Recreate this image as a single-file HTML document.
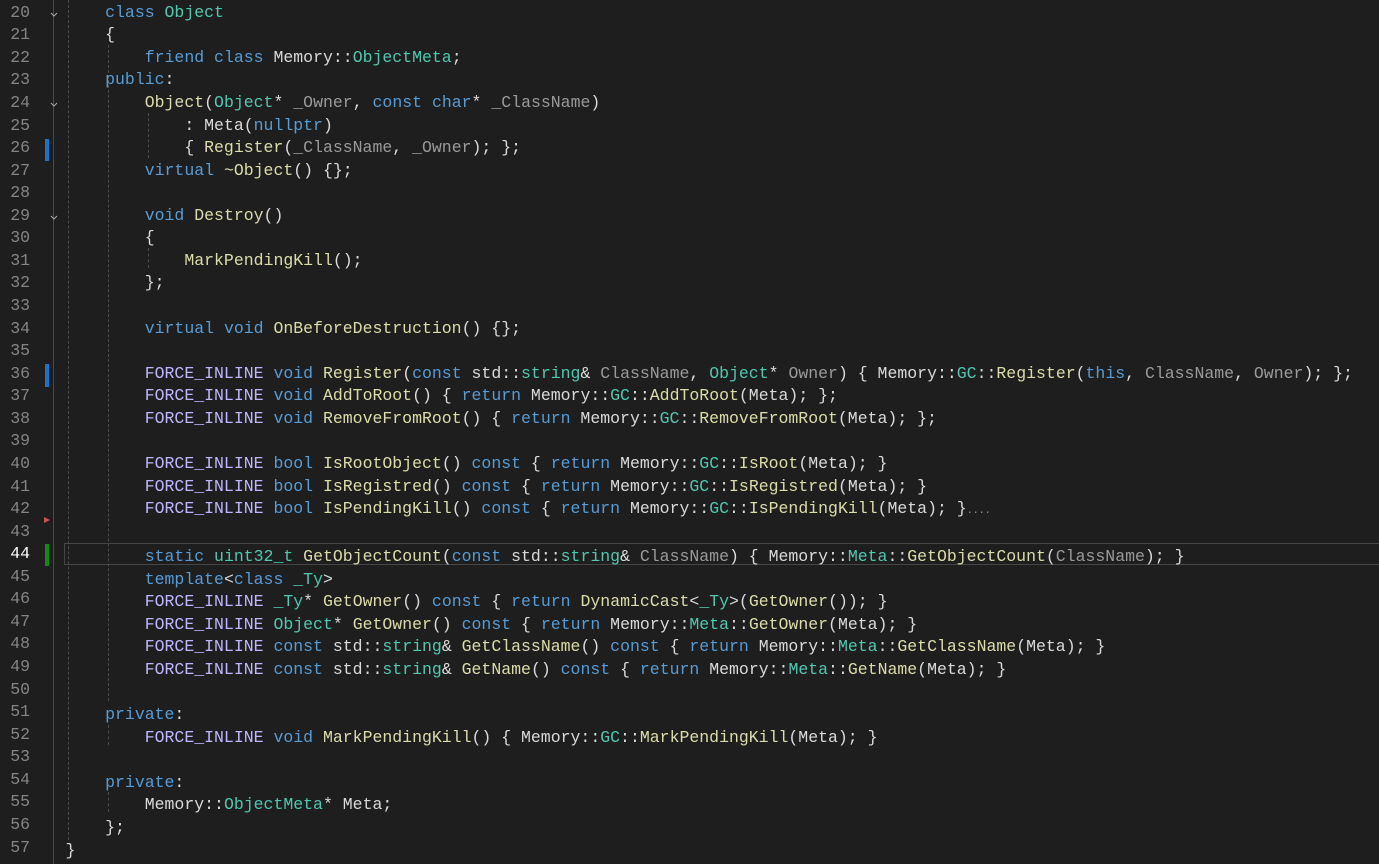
<!DOCTYPE html>
<html><head><meta charset="utf-8"><style>
html,body{margin:0;padding:0;background:#1e1e1e;width:1379px;height:864px;overflow:hidden}
#g{position:absolute;left:0;top:1.7px;width:30px;text-align:right;font:16.5px/22.57px "Liberation Mono",monospace;color:#858585}
#c{position:absolute;left:65.5px;top:1.7px;font:16.5px/22.57px "Liberation Mono",monospace;color:#dadada;white-space:pre}
.k{color:#569cd6}.t{color:#4ec9b0}.f{color:#dcdcaa}.m{color:#beb7ff}.p{color:#9a9a9a}
.vg{position:absolute;width:0;border-left:1px dashed #4a4a4a}
.ch{position:absolute;left:50px;width:8px;height:5px}
</style></head><body>
<div style="position:absolute;left:53px;top:0;width:1px;height:864px;background:#4a4a4a"></div>
<div style="position:absolute;left:64px;top:543px;width:1315px;height:22px;border:1px solid #464646;border-right:none;box-sizing:border-box"></div>
<div class="vg" style="left:68px;top:0;height:840px"></div>
<div class="vg" style="left:108px;top:45px;height:656px"></div>
<div class="vg" style="left:108px;top:725px;height:20px"></div>
<div class="vg" style="left:108px;top:792px;height:20px"></div>
<div class="vg" style="left:148px;top:113px;height:45px"></div>
<div class="vg" style="left:148px;top:248px;height:20px"></div>
<div style="position:absolute;left:45px;top:139px;width:4px;height:22px;background:#1b74c9"></div>
<div style="position:absolute;left:45px;top:364px;width:4px;height:23px;background:#1b74c9"></div>
<div style="position:absolute;left:45px;top:544px;width:4px;height:22px;background:#128a12"></div>
<div style="position:absolute;left:44px;top:517px;width:0;height:0;border-left:6px solid #d85050;border-top:3px solid transparent;border-bottom:3px solid transparent"></div>
<svg class="ch" style="top:12px" viewBox="0 0 8 5"><path d="M1 1L4 4L7 1" stroke="#aaa" fill="none"/></svg>
<svg class="ch" style="top:102px" viewBox="0 0 8 5"><path d="M1 1L4 4L7 1" stroke="#aaa" fill="none"/></svg>
<svg class="ch" style="top:215px" viewBox="0 0 8 5"><path d="M1 1L4 4L7 1" stroke="#aaa" fill="none"/></svg>
<div id="g">20
21
22
23
24
25
26
27
28
29
30
31
32
33
34
35
36
37
38
39
40
41
42
43
<span style="color:#fff">44</span>
45
46
47
48
49
50
51
52
53
54
55
56
57</div>
<div id="c">    <span class="k">class</span> <span class="t">Object</span>
    {
        <span class="k">friend</span> <span class="k">class</span> Memory::<span class="t">ObjectMeta</span>;
    <span class="k">public</span>:
        <span class="f">Object</span>(<span class="t">Object</span>* <span class="p">_Owner</span>, <span class="k">const</span> <span class="k">char</span>* <span class="p">_ClassName</span>)
            : Meta(<span class="k">nullptr</span>)
            { <span class="f">Register</span>(<span class="p">_ClassName</span>, <span class="p">_Owner</span>); };
        <span class="k">virtual</span> <span class="f">~Object</span>() {};

        <span class="k">void</span> <span class="f">Destroy</span>()
        {
            <span class="f">MarkPendingKill</span>();
        };

        <span class="k">virtual</span> <span class="k">void</span> <span class="f">OnBeforeDestruction</span>() {};

        <span class="m">FORCE_INLINE</span> <span class="k">void</span> <span class="f">Register</span>(<span class="k">const</span> std::<span class="t">string</span>&amp; <span class="p">ClassName</span>, <span class="t">Object</span>* <span class="p">Owner</span>) { Memory::<span class="t">GC</span>::<span class="f">Register</span>(<span class="k">this</span>, <span class="p">ClassName</span>, <span class="p">Owner</span>); };
        <span class="m">FORCE_INLINE</span> <span class="k">void</span> <span class="f">AddToRoot</span>() { <span class="k">return</span> Memory::<span class="t">GC</span>::<span class="f">AddToRoot</span>(Meta); };
        <span class="m">FORCE_INLINE</span> <span class="k">void</span> <span class="f">RemoveFromRoot</span>() { <span class="k">return</span> Memory::<span class="t">GC</span>::<span class="f">RemoveFromRoot</span>(Meta); };

        <span class="m">FORCE_INLINE</span> <span class="k">bool</span> <span class="f">IsRootObject</span>() <span class="k">const</span> { <span class="k">return</span> Memory::<span class="t">GC</span>::<span class="f">IsRoot</span>(Meta); }
        <span class="m">FORCE_INLINE</span> <span class="k">bool</span> <span class="f">IsRegistred</span>() <span class="k">const</span> { <span class="k">return</span> Memory::<span class="t">GC</span>::<span class="f">IsRegistred</span>(Meta); }
        <span class="m">FORCE_INLINE</span> <span class="k">bool</span> <span class="f">IsPendingKill</span>() <span class="k">const</span> { <span class="k">return</span> Memory::<span class="t">GC</span>::<span class="f">IsPendingKill</span>(Meta); }<span class="p" style="font-size:10px">....</span>

        <span class="k">static</span> <span class="t">uint32_t</span> <span class="f">GetObjectCount</span>(<span class="k">const</span> std::<span class="t">string</span>&amp; <span class="p">ClassName</span>) { Memory::<span class="t">Meta</span>::<span class="f">GetObjectCount</span>(<span class="p">ClassName</span>); }
        <span class="k">template</span>&lt;<span class="k">class</span> <span class="t">_Ty</span>&gt;
        <span class="m">FORCE_INLINE</span> <span class="t">_Ty</span>* <span class="f">GetOwner</span>() <span class="k">const</span> { <span class="k">return</span> <span class="f">DynamicCast</span>&lt;<span class="t">_Ty</span>&gt;(<span class="f">GetOwner</span>()); }
        <span class="m">FORCE_INLINE</span> <span class="t">Object</span>* <span class="f">GetOwner</span>() <span class="k">const</span> { <span class="k">return</span> Memory::<span class="t">Meta</span>::<span class="f">GetOwner</span>(Meta); }
        <span class="m">FORCE_INLINE</span> <span class="k">const</span> std::<span class="t">string</span>&amp; <span class="f">GetClassName</span>() <span class="k">const</span> { <span class="k">return</span> Memory::<span class="t">Meta</span>::<span class="f">GetClassName</span>(Meta); }
        <span class="m">FORCE_INLINE</span> <span class="k">const</span> std::<span class="t">string</span>&amp; <span class="f">GetName</span>() <span class="k">const</span> { <span class="k">return</span> Memory::<span class="t">Meta</span>::<span class="f">GetName</span>(Meta); }

    <span class="k">private</span>:
        <span class="m">FORCE_INLINE</span> <span class="k">void</span> <span class="f">MarkPendingKill</span>() { Memory::<span class="t">GC</span>::<span class="f">MarkPendingKill</span>(Meta); }

    <span class="k">private</span>:
        Memory::<span class="t">ObjectMeta</span>* Meta;
    };
}</div>
</body></html>
